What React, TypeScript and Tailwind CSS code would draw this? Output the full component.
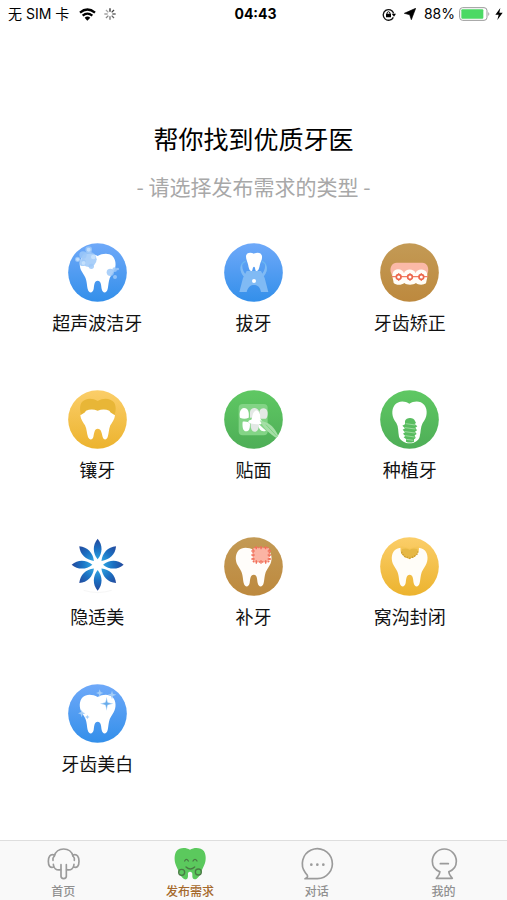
import type {ReactNode} from "react"

const TOOTH =
  "M89 39C74 30 54 29 44 40C33 52 33 71 41 85C46 95 53 101 55 113C57 122 57 129 59 138C62 151 74 152 77 138C79 124 79 113 89 113C99 113 99 124 101 138C104 152 116 151 119 138C121 129 121 122 123 113C125 101 132 95 137 85C145 71 145 52 134 40C124 29 104 30 89 39Z"

const GRADIENTS = {
  blue: ["#6fa9f9", "#338fea"],
  brown: ["#c39a55", "#bd893e"],
  gold: ["#fbce69", "#ecb32e"],
  green: ["#5fc863", "#4eae57"],
}

interface DiscProps {
  id: string
  tone: keyof typeof GRADIENTS
  children: ReactNode
}

function Disc({id, tone, children}: DiscProps) {
  const [from, to] = GRADIENTS[tone]
  return (
    <svg viewBox="0 0 177 177" className="size-[59px]" aria-hidden="true">
      <defs>
        <linearGradient id={id} x1="0" y1="0" x2="0" y2="1">
          <stop offset="0" stopColor={from} />
          <stop offset="1" stopColor={to} />
        </linearGradient>
      </defs>
      <circle cx="88.5" cy="88.5" r="88" fill={`url(#${id})`} />
      {children}
    </svg>
  )
}

function CleaningIcon() {
  return (
    <Disc id="cleaning" tone="blue">
      <path d={TOOTH} fill="#fff" />
      <g fill="#9cc8f8" fillOpacity="0.85">
        <circle cx="63" cy="49" r="23" />
        <circle cx="45" cy="36" r="11" />
        <circle cx="29" cy="49" r="8" />
        <circle cx="62" cy="20" r="10" />
        <circle cx="44" cy="59" r="10" />
        <circle cx="70" cy="70" r="8" />
        <circle cx="127" cy="88" r="11" />
        <circle cx="140" cy="80" r="7" />
        <circle cx="141" cy="102" r="6" />
        <circle cx="149" cy="78" r="4" />
      </g>
      <g fill="#d3e8fd" fillOpacity="0.7">
        <circle cx="62" cy="20" r="6" />
        <circle cx="29" cy="49" r="5" />
        <circle cx="76" cy="42" r="7" />
        <circle cx="47" cy="60" r="6" />
      </g>
    </Disc>
  )
}

function ExtractionIcon() {
  return (
    <Disc id="extraction" tone="blue">
      <g fill="none" stroke="#69b7f2" strokeWidth="4">
        <path d="M65 55C48 61 45 83 63 99" />
        <path d="M113 55C130 61 133 83 115 99" />
      </g>
      <path d="M68 84L111 84L122 105L133 147H111C108 130 98 126 90 126C81 126 72 131 68 147H46L57 105Z" fill="#80baf4" />
      <path d="M55 62C53 75 58 89 69 98L64 104C49 94 46 74 55 62ZM123 62C125 75 120 89 109 98L114 104C129 94 132 74 123 62Z" fill="#80baf4" />
      <circle cx="90" cy="114" r="6" fill="#fff" />
      <path d="M90 32C79 26 66 29 66 40C66 50 70 55 72 64C74 72 75 84 82 84C87 84 85 71 90 71C95 71 92 84 98 84C105 84 106 72 108 64C110 55 115 50 114 40C113 29 101 26 90 32Z" fill="#fff" />
    </Disc>
  )
}

function BracesIcon() {
  return (
    <Disc id="braces" tone="brown">
      <path d="M50 59H127C140 59 147 72 144 87L139 103H38L32 86C29 71 37 59 50 59Z" fill="#fbb9a7" />
      <path d="M54 79C64 79 70 84 72 91C76 76 102 76 107 91C110 76 137 76 141 91C144 102 140 110 138 121C130 127 113 126 108 120C99 127 79 126 73 120C65 127 48 127 41 120C40 109 35 102 38 91C41 82 47 79 54 79Z" fill="#fffdf8" />
      <path d="M35 101H144" stroke="#f37b62" strokeWidth="4" />
      <g fill="#fff" stroke="#ed674c" strokeWidth="5">
        <circle cx="56" cy="102" r="7" />
        <circle cx="90" cy="102" r="7" />
        <circle cx="124" cy="102" r="7" />
      </g>
      <path d="M56 91V96M56 108V113M90 91V96M90 108V113M124 91V96M124 108V113" stroke="#ed674c" strokeWidth="4" />
    </Disc>
  )
}

function CrownIcon() {
  return (
    <Disc id="crown" tone="gold">
      <path d="M89 33C70 21 51 26 42 36C34 46 35 64 41 78H138C145 64 145 46 137 36C128 26 109 21 89 33Z" fill="#e8b637" />
      <path d="M37 76C41 72 50 70 54 62C65 57 77 57 89 62C101 57 113 57 124 62C128 70 137 72 141 76C140 89 132 98 127 106C122 118 123 130 119 141C116 151 106 150 104 141C101 129 100 116 89 116C79 116 79 129 76 141C74 150 64 151 60 141C56 130 57 118 51 106C46 98 38 89 37 76Z" fill="#fff" />
    </Disc>
  )
}

function VeneerIcon() {
  return (
    <Disc id="veneer" tone="green">
      <rect x="44" y="42" width="87" height="94" rx="12" fill="#83d486" />
      <g fill="#fff">
        <path d="M48 83C45 68 49 55 60 54C73 54 76 68 74 83Q61 89 48 83Z" />
        <path d="M56 95C66 94 76 96 78 101C78 114 76 124 66 124C57 124 54 110 56 95Z" />
        <path d="M100 98L126 122C112 128 103 116 100 98Z" />
      </g>
      <g fill="#e3e8e5">
        <path d="M78 65C80 50 102 50 105 65L102 83H78Z" />
        <path d="M106 65C109 51 130 51 131 68C131 78 129 84 125 86H108Z" />
        <path d="M80 98H104C106 114 101 125 92 125C83 125 79 114 80 98Z" />
      </g>
      <path d="M97 61C107 65 110 74 108 85C113 91 117 98 111 103C97 101 86 103 76 99C70 95 73 91 82 89C87 79 84 66 97 61Z" fill="#fff" />
      <path d="M107 91L129 98C144 105 155 119 163 138L156 143C137 132 121 118 107 91Z" fill="#a5dfa6" />
      <path d="M126 104L158 138" stroke="#6dca72" strokeWidth="2" />
    </Disc>
  )
}

function ImplantIcon() {
  return (
    <Disc id="implant" tone="green">
      <path d="M88 41C74 31 54 32 44 45C33 60 35 82 49 99C56 111 54 125 57 140C61 152 75 160 89 160C103 160 116 152 119 140C123 125 121 112 128 99C142 82 144 60 133 45C122 31 102 32 88 41Z" fill="#fff" />
      <path d="M75 93C78 81 102 81 105 93L108 99L104 102L112 109L106 113L111 121L105 125L110 132L104 136L107 144L102 148V155Q89 160 78 155V147L71 142L76 138L69 131L75 127L68 119L75 115L67 107L75 103Z" fill="#59bd60" />
      <g stroke="#b9e7b9" strokeWidth="2">
        <path d="M77 101L106 105" />
        <path d="M75 113L106 117" />
        <path d="M75 125L105 129" />
        <path d="M76 137L104 141" />
        <path d="M79 148L100 151" />
      </g>
    </Disc>
  )
}

function InvisalignIcon() {
  return (
    <svg viewBox="0 0 177 177" className="size-[59px]" aria-hidden="true">
      <defs>
        <linearGradient id="petal" x1="0" y1="0" x2="0" y2="1">
          <stop offset="0" stopColor="#24489b" />
          <stop offset="0.5" stopColor="#1b70c2" />
          <stop offset="1" stopColor="#2ea3e0" />
        </linearGradient>
      </defs>
      {[0, 45, 90, 135, 180, 225, 270, 315].map(angle => (
        <path
          key={angle}
          d="M89 5C73 24 74 48 89 67C104 48 105 24 89 5Z"
          fill="url(#petal)"
          transform={`rotate(${angle} 89 83)`}
        />
      ))}
      <path d="M47 160Q89 173 131 160" fill="none" stroke="#f6f6f6" strokeWidth="3" />
    </svg>
  )
}

function FillingIcon() {
  return (
    <Disc id="filling" tone="brown">
      <path d={TOOTH} fill="#fffdfa" />
      <rect x="87" y="32" width="49" height="43" rx="5" fill="#fbb4a4" />
      <rect x="87" y="32" width="49" height="43" rx="5" fill="none" stroke="#f1705b" strokeWidth="4" strokeDasharray="5 4" />
      <path d="M97 27V37M111 27V37M125 27V37M97 70V80M111 70V80M125 70V80M82 42H92M82 54H92M82 66H92M131 42H141M131 54H141M131 66H141" stroke="#f1705b" strokeWidth="4" />
    </Disc>
  )
}

function SealantIcon() {
  return (
    <Disc id="sealant" tone="gold">
      <path d={TOOTH} fill="#fffdf8" />
      <path d="M62 28L89 34L116 28C119 42 114 50 107 56C101 64 95 60 89 65C81 62 75 63 71 56C63 51 60 43 62 28Z" fill="#f6c657" />
      <path d="M66 36Q78 32 89 38Q100 32 112 36C115 46 113 50 107 56C101 64 95 60 89 65C81 62 75 63 71 56C63 51 62 46 66 36Z" fill="#e6b846" />
      <path d="M65 44C65 52 72 53 73 58C79 61 84 60 89 64C95 60 101 61 105 56C112 52 114 49 113 43" fill="none" stroke="#c99c35" strokeWidth="4" strokeDasharray="4 4" />
    </Disc>
  )
}

function WhiteningIcon() {
  return (
    <Disc id="whitening" tone="blue">
      <path d={TOOTH} fill="#fff" />
      <g fill="#a4cdf7">
        <path d="M116 39L119 55L136 59L119 63L116 80L112 63L96 59L112 55Z" />
        <path d="M132 20L135 29L145 32L135 36L132 46L129 36L119 32L129 29Z" />
        <path d="M95 16L98 24L106 27L98 30L95 39L92 30L84 27L92 24Z" />
        <path d="M41 77L44 85L52 88L44 91L41 100L38 91L30 88L38 85Z" />
        <path d="M58 92L60 97L65 99L60 101L58 106L56 101L51 99L56 97Z" />
      </g>
      <path d="M116 47L118 56L128 59L118 62L116 72L113 62L104 59L113 56Z" fill="#68acea" />
    </Disc>
  )
}

const services = [
  {name: "超声波洁牙", icon: <CleaningIcon />},
  {name: "拔牙", icon: <ExtractionIcon />},
  {name: "牙齿矫正", icon: <BracesIcon />},
  {name: "镶牙", icon: <CrownIcon />},
  {name: "贴面", icon: <VeneerIcon />},
  {name: "种植牙", icon: <ImplantIcon />},
  {name: "隐适美", icon: <InvisalignIcon />},
  {name: "补牙", icon: <FillingIcon />},
  {name: "窝沟封闭", icon: <SealantIcon />},
  {name: "牙齿美白", icon: <WhiteningIcon />},
]

// Tab icons share a 96-unit box drawn at 32px
const tabs = [
  {
    name: "首页",
    icon: (
      <g fill="none" stroke="#9b9b9b" strokeWidth="5" strokeLinecap="round" strokeLinejoin="round">
        <path d="M22 24C26 10 36 3 50 3C64 3 74 10 78 24" />
        <path d="M22 21C9 17 4 27 4 40C4 54 9 61 21 57" />
        <path d="M78 21C91 17 96 27 96 40C96 54 91 61 79 57" />
        <path d="M22 24Q16 30 18 37M78 24Q84 30 82 37" />
        <path d="M19 49C19 61 28 68 41 65M81 49C81 61 72 68 59 65" />
        <path d="M42 50V85C42 94 58 94 58 85V50" />
      </g>
    ),
  },
  {
    name: "发布需求",
    active: true,
    icon: (
      <>
        <path d="M48 5C35-2 16-2 7 10C-1 24 1 43 8 57C15 70 17 84 29 92C38 98 43 91 42 81C41 75 43 71 48 71C53 71 56 75 55 82C54 92 60 97 68 92C80 84 81 70 88 57C96 43 98 24 90 10C81-2 61-2 48 5Z" fill="#5bc95d" />
        <g fill="none" stroke="#4a7b45" strokeWidth="4" strokeLinecap="round">
          <path d="M32 39Q37 29 43 39M57 39Q63 29 69 39" />
          <path d="M36 57Q49 69 62 57" />
          <circle cx="23" cy="73" r="9" />
          <circle cx="73" cy="72" r="9" />
        </g>
      </>
    ),
  },
  {
    name: "对话",
    icon: (
      <>
        <path d="M13 74A45 45 0 1 1 49 92H12Q22 88 19 82Z" fill="none" stroke="#9b9b9b" strokeWidth="5" strokeLinecap="round" strokeLinejoin="round" />
        <g fill="#9b9b9b">
          <circle cx="31" cy="50" r="4" />
          <circle cx="49" cy="50" r="4" />
          <circle cx="67" cy="50" r="4" />
        </g>
      </>
    ),
  },
  {
    name: "我的",
    icon: (
      <g fill="none" stroke="#9b9b9b" strokeWidth="5" strokeLinecap="round" strokeLinejoin="round">
        <path d="M35 71C21 66 13 54 13 40C13 19 29 3 49 3C69 3 85 19 85 40C85 54 77 66 63 71" />
        <path d="M35 71C36 79 31 84 25 91H73C67 84 62 79 63 71" />
        <path d="M37 47H61" />
      </g>
    ),
  },
]

function StatusBar() {
  return (
    <header className="grid h-7 grid-cols-3 items-center pl-2 pr-1 text-sm text-black">
      <div className="flex items-center gap-2 whitespace-nowrap">
        <span className="pr-0.5">无 SIM 卡</span>
        <svg viewBox="0 0 51 39" className="h-[13px] w-[17px]" aria-hidden="true">
          <g fill="none" stroke="#000" strokeWidth="7">
            <path d="M3 14Q25-5 48 14" />
            <path d="M11 23Q25 11 40 23" />
          </g>
          <path d="M17 29Q25 22 34 29L25 38Z" />
        </svg>
        <svg viewBox="0 0 36 36" className="size-3" aria-hidden="true">
          {[0, 45, 90, 135, 180, 225, 270, 315].map((angle, i) => (
            <path key={angle} d="M18 1V11" stroke="#333" strokeWidth="4" strokeOpacity={1 - i * 0.08} transform={`rotate(${angle} 18 18)`} />
          ))}
        </svg>
      </div>
      <time className="text-center text-sm font-bold">04:43</time>
      <div className="flex items-center justify-end gap-1 whitespace-nowrap">
        <svg viewBox="0 0 42 39" className="h-[13px] w-[14px]" aria-hidden="true">
          <path d="M34 28A16 16 0 1 1 35 16" fill="none" stroke="#111" strokeWidth="4" />
          <path d="M29 17H42L36 26Z" />
          <rect x="12" y="17" width="15" height="11" rx="1" />
          <path d="M15 18V14Q19 8 24 14V18" fill="none" stroke="#111" strokeWidth="3" />
        </svg>
        <svg viewBox="0 0 36 36" className="mx-1 size-3" aria-hidden="true">
          <path d="M35 1L22 35L17 20L1 16Z" stroke="#000" strokeWidth="2" strokeLinejoin="round" />
        </svg>
        <span>88%</span>
        <svg viewBox="0 0 96 42" className="h-[14px] w-8" aria-hidden="true">
          <rect x="2" y="2" width="82" height="38" rx="9" fill="#fff" stroke="#999" strokeWidth="3" />
          <rect x="7" y="7" width="66" height="28" rx="3" fill="#4bd964" />
          <path d="M88 15Q94 21 88 27Z" fill="#999" />
        </svg>
        <svg viewBox="0 0 24 36" className="h-3 w-2" aria-hidden="true">
          <path d="M16 0L1 20H11L7 36L23 14H13Z" />
        </svg>
      </div>
    </header>
  )
}

function App() {
  return (
    <div className="flex min-h-screen flex-col bg-white font-['Inter','Noto_Sans_CJK_SC',sans-serif]">
      <StatusBar />

      <main className="flex-1 px-[19px] pt-[95px]">
        <h1 className="text-center text-[25px] leading-[34px] text-black">帮你找到优质牙医</h1>
        <p className="mt-[14px] text-center font-['Noto_Sans_CJK_SC',sans-serif] text-[21px] leading-[30px] text-[#a8a8a8]">- 请选择发布需求的类型 -</p>

        <ul className="mt-[42px] grid auto-rows-[147px] grid-cols-3">
          {services.map(service => (
            <li key={service.name} className="flex items-start justify-center">
              <button type="button" className="flex flex-col items-center gap-[9px] text-lg leading-[26px] text-[#111]">
                {service.icon}
                {service.name}
              </button>
            </li>
          ))}
        </ul>
      </main>

      <nav className="grid h-[60px] grid-cols-4 border-t border-[#dedede] bg-[#f9f9f9]">
        {tabs.map(tab => (
          <a
            key={tab.name}
            href="#"
            aria-current={tab.active ? "page" : undefined}
            className={`flex flex-col items-center gap-1 pt-[7px] text-xs font-medium ${tab.active ? "text-[#a5692c]" : "text-[#909090]"}`}
          >
            <svg viewBox="0 0 96 96" className="size-8 overflow-visible" aria-hidden="true">
              {tab.icon}
            </svg>
            {tab.name}
          </a>
        ))}
      </nav>
    </div>
  )
}

export default App
